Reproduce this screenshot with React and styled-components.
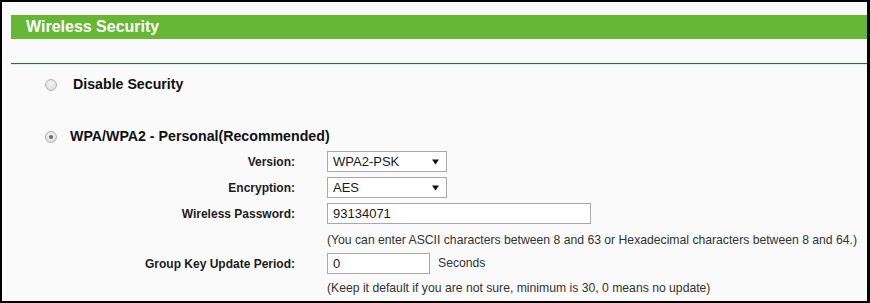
import React from 'react';
import styled, { createGlobalStyle } from 'styled-components';

const GlobalStyle = createGlobalStyle`
  html, body {
    margin: 0;
    padding: 0;
    background: #000;
  }
  body {
    font-family: 'Liberation Sans', Arial, sans-serif;
  }
`

const Frame = styled.div`
  width: 870px;
  height: 303px;
  box-sizing: border-box;
  border-style: solid;
  border-color: #000;
  border-width: 2px 3px 2px 2px;
  background: #fafafa;
  padding: 13px 0 0 9px;
  overflow: hidden;
`

const TitleBar = styled.div`
  height: 24px;
  line-height: 24px;
  background: #66b834;
  color: #fff;
  font-size: 16px;
  font-weight: bold;
  padding-left: 15px;
`

const Divider = styled.div`
  margin-top: 24px;
  height: 1px;
  background: #2c6a4c;
  border-bottom: 1px solid #e3efe6;
`

const OptionRow = styled.div`
  display: flex;
  align-items: center;
  height: 20px;
  margin-top: ${p => p.$top}px;
  padding-left: 34px;
`

const Radio = styled.span`
  position: relative;
  width: 12px;
  height: 12px;
  box-sizing: border-box;
  border-radius: 50%;
  border: 1px solid #b4b4b4;
  background: radial-gradient(circle at 50% 35%, #f4f4f4 0%, #d8d8d8 100%);
  margin-right: ${p => p.$gap}px;
  flex: none;

  &::after {
    content: '';
    display: ${p => (p.$checked ? 'block' : 'none')};
    position: absolute;
    left: 3px;
    top: 3px;
    width: 4px;
    height: 4px;
    border-radius: 50%;
    background: #6a6a6a;
  }
`

const OptionLabel = styled.span`
  font-size: 14.2px;
  font-weight: bold;
  color: #111;
  margin-top: -3px;
`

const Form = styled.div`
  display: grid;
  grid-template-columns: 284px 1fr;
  column-gap: 32px;
  margin-top: 4px;
`

const Label = styled.div`
  grid-column: 1;
  height: 21px;
  display: flex;
  align-items: center;
  justify-content: flex-end;
  font-size: 12px;
  font-weight: bold;
  color: #1c1c1c;
  margin-top: ${p => p.$top || 0}px;
`

const Field = styled.div`
  grid-column: 2;
  display: flex;
  align-items: center;
  height: 21px;
  margin-top: ${p => p.$top || 0}px;
`

const SelectBox = styled.div`
  width: 120px;
  height: 21px;
  box-sizing: border-box;
  border: 1px solid #a9a9a9;
  background: #fff;
  display: flex;
  align-items: center;
  justify-content: space-between;
  padding: 0 7px 0 5px;
  font-size: 13px;
  color: #1a1a1a;
`

const TextBox = styled.div`
  width: ${p => p.$width}px;
  height: 21px;
  box-sizing: border-box;
  border: 1px solid #a9a9a9;
  background: #fff;
  display: flex;
  align-items: center;
  padding-left: 5px;
  font-size: 13px;
  color: #1a1a1a;
`

const Unit = styled.span`
  font-size: 12.2px;
  color: #333;
  margin-left: 8px;
  margin-top: -2px;
`

const Hint = styled.div`
  grid-column: 2;
  font-size: 12.2px;
  line-height: 16px;
  color: #333;
  margin-top: ${p => p.$top}px;
`

const Arrow = () => (
  <svg width="7" height="6" viewBox="0 0 7 6">
    <path d="M0 0.5 L7 0.5 L3.5 5.5 Z" fill="#111" />
  </svg>
)

const Select = ({ value }) => (
  <SelectBox>
    <span>{value}</span>
    <Arrow />
  </SelectBox>
)

const App = () => (
  <>
    <GlobalStyle />
    <Frame>
      <TitleBar>Wireless Security</TitleBar>
      <Divider />
      <OptionRow $top={10}>
        <Radio $gap={16} />
        <OptionLabel>Disable Security</OptionLabel>
      </OptionRow>
      <OptionRow $top={32}>
        <Radio $gap={13} $checked />
        <OptionLabel>WPA/WPA2 - Personal(Recommended)</OptionLabel>
      </OptionRow>
      <Form>
        <Label>Version:</Label>
        <Field><Select value="WPA2-PSK" /></Field>
        <Label $top={5}>Encryption:</Label>
        <Field $top={5}><Select value="AES" /></Field>
        <Label $top={5}>Wireless Password:</Label>
        <Field $top={5}><TextBox $width={264}>93134071</TextBox></Field>
        <Hint $top={8}>(You can enter ASCII characters between 8 and 63 or Hexadecimal characters between 8 and 64.)</Hint>
        <Label $top={5}>Group Key Update Period:</Label>
        <Field $top={5}>
          <TextBox $width={103}>0</TextBox>
          <Unit>Seconds</Unit>
        </Field>
        <Hint $top={6}>(Keep it default if you are not sure, minimum is 30, 0 means no update)</Hint>
      </Form>
    </Frame>
  </>
)

export default App;
